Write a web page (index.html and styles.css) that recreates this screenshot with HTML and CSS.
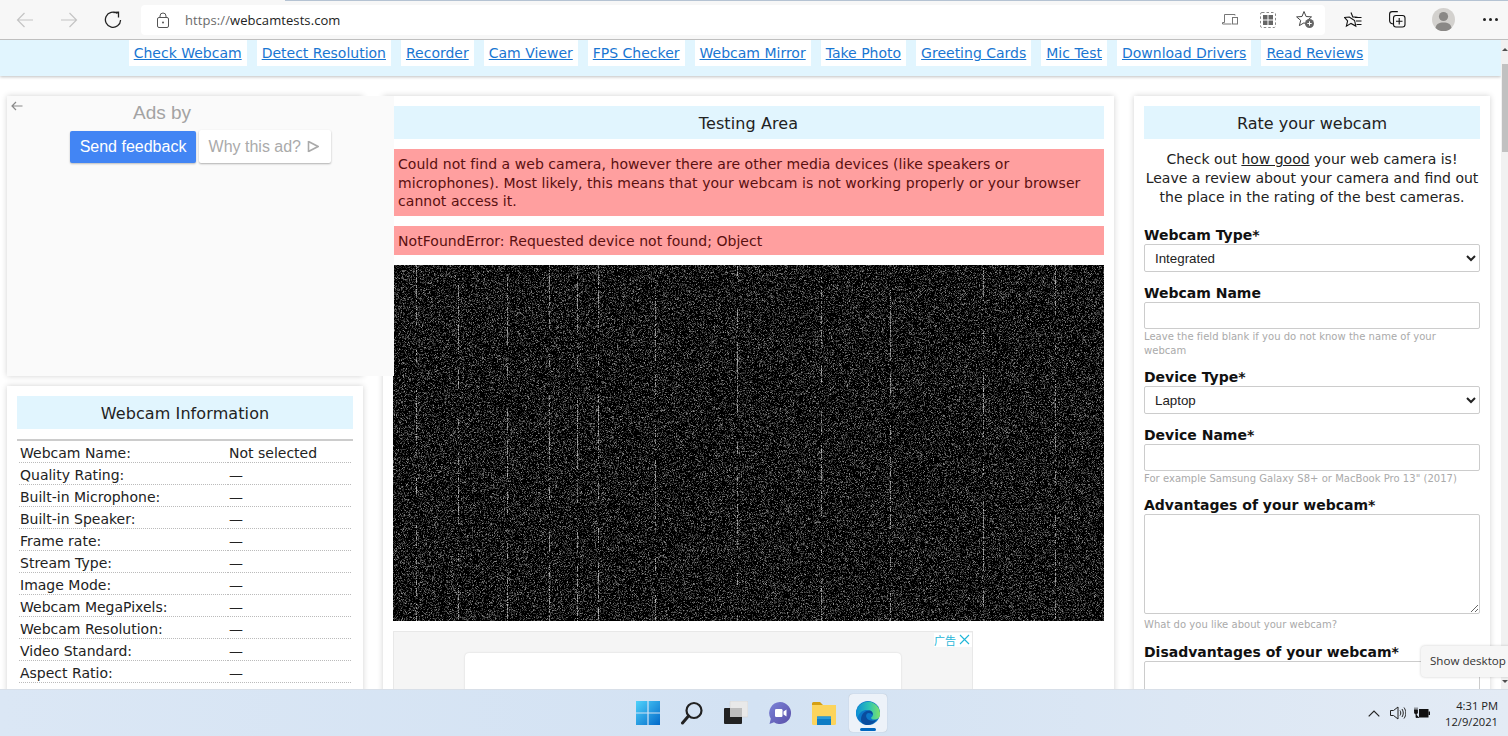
FILE: index.html
```html
<!DOCTYPE html>
<html lang="en">
<head>
<meta charset="utf-8">
<title>Webcam Test</title>
<link rel="stylesheet" href="styles.css">
</head>
<body>
<div class="screen">
  <header class="chrome">
    <div class="topline"></div>
    <button class="cbtn dim"><svg width="18" height="18" viewBox="0 0 18 18"><path d="M17 9H1.5M8.5 2 1.5 9l7 7" fill="none" stroke="#c4c4c4" stroke-width="1.2"/></svg></button>
    <button class="cbtn dim"><svg width="18" height="18" viewBox="0 0 18 18"><path d="M1 9h15.5M9.5 2l7 7-7 7" fill="none" stroke="#c4c4c4" stroke-width="1.2"/></svg></button>
    <button class="cbtn"><svg width="18" height="18" viewBox="0 0 18 18"><path d="M13.5 2.6A7.6 7.6 0 1 0 16.6 9" fill="none" stroke="#222" stroke-width="1.3"/><path d="M9.5 1.5 14.5 1.2V6.5" fill="none" stroke="#222" stroke-width="1.3"/></svg></button>
    <div class="omnibox">
      <svg class="lock" width="14" height="16" viewBox="0 0 14 16"><rect x="1.5" y="5.5" width="11" height="10" rx="1.5" fill="none" stroke="#555"/><path d="M4 5.5V4a3 3 0 0 1 6 0v1.5" fill="none" stroke="#555"/><circle cx="7" cy="10.5" r="1" fill="#555"/></svg>
      <span class="url"><span class="proto">https://</span>webcamtests.com</span>
      <span class="spacer"></span>
      <svg class="oicon wide" width="16" height="14" viewBox="0 0 16 14"><path d="M13 2.5V1.5H2.5v8h-2v1.5h9" fill="none" stroke="#777"/><rect x="10.5" y="4.5" width="5" height="6.5" fill="none" stroke="#777"/></svg>
      <svg class="oicon" width="16" height="16" viewBox="0 0 16 16"><rect x=".5" y=".5" width="15" height="15" rx="1.5" fill="none" stroke="#888" stroke-dasharray="2.5 2"/><rect x="3" y="3" width="4.5" height="4.5" fill="#666"/><rect x="8.5" y="3" width="4.5" height="4.5" fill="#666"/><rect x="3" y="8.5" width="4.5" height="4.5" fill="#666"/><rect x="8.5" y="8.5" width="4.5" height="4.5" fill="#666"/></svg>
      <svg class="oicon last" width="19" height="19" viewBox="0 0 19 19"><path d="M8 1.5l2.1 5 5.4.4-4.1 3.5 1.3 5.2L8 12.8l-4.6 2.8 1.3-5.2L.6 6.9 6 6.5z" fill="none" stroke="#444"/><circle cx="13.5" cy="13.5" r="4.5" fill="#666"/><path d="M11.3 13.5h4.4M13.5 11.3v4.4" stroke="#fff"/></svg>
    </div>
    <div class="tools">
      <svg width="18" height="17" viewBox="0 0 18 17"><path d="M7 1.5l1.8 4.4 4.7.4M10.6 9.5l1.2 5.6L7 12.4l-4.6 2.7 1.2-5.2L.5 6.4l4.8-.4z" fill="none" stroke="#111" stroke-width="1.1"/><path d="M11 6.5h6.5M12 10h5.500M12.500 13.500h5" stroke="#111" stroke-width="1.100"/></svg>
      <svg width="17" height="17" viewBox="0 0 17 17"><path d="M4 13C1.500 12.500.6 11 .6 9.500V3.200C.6 1.700 1.700.6 3.200.6h5.600" fill="none" stroke="#111" stroke-width="1.100"/><rect x="4.500" y="4.500" width="11.500" height="11.500" rx="2.500" fill="none" stroke="#111" stroke-width="1.100"/><path d="M10.200 7v6.500M7 10.200h6.500" stroke="#111" stroke-width="1.100"/></svg>
      <span class="avatar"><svg width="23" height="23" viewBox="0 0 23 23"><circle cx="11.500" cy="11.500" r="11.500" fill="#d3d1ce"/><circle cx="11.500" cy="8.500" r="4.600" fill="#8a8886"/><path d="M3.500 20c.5-3.800 3.500-5.500 8-5.500s7.500 1.700 8 5.500a11.500 11.500 0 0 1-16 0z" fill="#8a8886"/></svg></span>
      <span class="more"><i></i><i></i><i></i></span>
    </div>
  </header>

  <div class="viewport">
    <div class="page">
      <nav class="nav">
        <a href="#">Check Webcam</a>
        <a href="#">Detect Resolution</a>
        <a href="#">Recorder</a>
        <a href="#">Cam Viewer</a>
        <a href="#">FPS Checker</a>
        <a href="#">Webcam Mirror</a>
        <a href="#">Take Photo</a>
        <a href="#">Greeting Cards</a>
        <a href="#">Mic Test</a>
        <a href="#">Download Drivers</a>
        <a href="#">Read Reviews</a>
      </nav>
      <main class="cols">
        <aside class="left">
          <div class="adslot">
            <div class="adpanel">
              <svg class="adback" width="12" height="10" viewBox="0 0 12 10"><path d="M11.500 5H1M5 1 1 5l4 4" fill="none" stroke="#8a8a8a" stroke-width="1.200"/></svg>
              <div class="adsby">Ads by</div>
              <div class="adbtns">
                <span class="fb">Send feedback</span>
                <span class="why">Why this ad? <svg width="12" height="13" viewBox="0 0 12 13"><path d="M1.500 1v11M1.500 1.500 11 6.500l-9.500 5" fill="none" stroke="#aaa" stroke-width="1.600"/></svg></span>
              </div>
            </div>
          </div>
          <section class="card info">
            <h2 class="head">Webcam Information</h2>
            <dl class="specs">
              <div class="row"><dt>Webcam Name:</dt><dd>Not selected</dd></div>
              <div class="row"><dt>Quality Rating:</dt><dd>—</dd></div>
              <div class="row"><dt>Built-in Microphone:</dt><dd>—</dd></div>
              <div class="row"><dt>Built-in Speaker:</dt><dd>—</dd></div>
              <div class="row"><dt>Frame rate:</dt><dd>—</dd></div>
              <div class="row"><dt>Stream Type:</dt><dd>—</dd></div>
              <div class="row"><dt>Image Mode:</dt><dd>—</dd></div>
              <div class="row"><dt>Webcam MegaPixels:</dt><dd>—</dd></div>
              <div class="row"><dt>Webcam Resolution:</dt><dd>—</dd></div>
              <div class="row"><dt>Video Standard:</dt><dd>—</dd></div>
              <div class="row"><dt>Aspect Ratio:</dt><dd>—</dd></div>
            </dl>
          </section>
        </aside>

        <section class="card center">
          <h2 class="head">Testing Area</h2>
          <div class="alert">Could not find a web camera, however there are other media devices (like speakers or microphones). Most likely, this means that your webcam is not working properly or your browser cannot access it.</div>
          <div class="alert">NotFoundError: Requested device not found; Object</div>
          <canvas class="noise" id="noise" width="711" height="356"></canvas>
          <div class="ad2">
            <span class="adtag">广告<svg width="11" height="11" viewBox="0 0 11 11"><path d="M1 1l9 9M10 1l-9 9" stroke="#1fb6d8" stroke-width="1.100"/></svg></span>
            <div class="ad2inner"></div>
          </div>
        </section>

        <section class="card rate">
          <h2 class="head">Rate your webcam</h2>
          <p class="intro">Check out <a href="#">how good</a> your web camera is!<br>Leave a review about your camera and find out the place in the rating of the best cameras.</p>
          <form class="form">
            <label class="lab">Webcam Type*</label>
            <select class="ctl sel"><option>Integrated</option></select>
            <label class="lab">Webcam Name</label>
            <input class="ctl inp" type="text">
            <p class="hint">Leave the field blank if you do not know the name of your webcam</p>
            <label class="lab">Device Type*</label>
            <select class="ctl sel"><option>Laptop</option></select>
            <label class="lab">Device Name*</label>
            <input class="ctl inp" type="text">
            <p class="hint">For example Samsung Galaxy S8+ or MacBook Pro 13" (2017)</p>
            <label class="lab">Advantages of your webcam*</label>
            <textarea class="ctl area"></textarea>
            <p class="hint tall">What do you like about your webcam?</p>
            <label class="lab">Disadvantages of your webcam*</label>
            <textarea class="ctl area"></textarea>
          </form>
        </section>
      </main>
    </div>
    <div class="scrollbar">
      <span class="sb-up"></span>
      <span class="sb-thumb"></span>
      <span class="sb-down"></span>
    </div>
  </div>

  <footer class="taskbar">
    <div class="tb-icons">
      <span class="tb"><svg width="24" height="24" viewBox="0 0 24 24"><defs><linearGradient id="w" x1="0" y1="0" x2="1" y2="1"><stop offset="0" stop-color="#4fd2fb"/><stop offset="1" stop-color="#0369c9"/></linearGradient></defs><path d="M0 0h11.400v11.400H0zM12.600 0H24v11.400H12.600zM0 12.600h11.400V24H0zM12.600 12.600H24V24H12.600z" fill="url(#w)"/></svg></span>
      <span class="tb"><svg width="24" height="24" viewBox="0 0 24 24"><circle cx="14" cy="9.500" r="7.500" fill="none" stroke="#222" stroke-width="2.200"/><path d="M8.500 15 2.500 22" stroke="#222" stroke-width="3" stroke-linecap="round"/></svg></span>
      <span class="tb"><svg width="24" height="24" viewBox="0 0 24 24"><rect x="6" y="0" width="18" height="16" rx="1" fill="#e9e9e9"/><rect x="6" y="0" width="18" height="16" rx="1" fill="none" stroke="#d5d5d5" stroke-width=".6"/><rect x="0" y="7" width="18" height="16" rx="1" fill="#222"/><rect x="6" y="7" width="12" height="9" fill="#bdbdbd"/></svg></span>
      <span class="tb"><svg width="24" height="24" viewBox="0 0 24 24"><defs><linearGradient id="ch" x1="0" y1="0" x2="1" y2="1"><stop offset="0" stop-color="#7b83d8"/><stop offset="1" stop-color="#5a4fa8"/></linearGradient></defs><path d="M12 1a11 11 0 1 1-6 20.200L1.500 23l1.300-5.300A11 11 0 0 1 12 1z" fill="url(#ch)"/><rect x="7" y="8" width="7.500" height="8" rx="1.200" fill="#fff"/><path d="M15.500 10.500l3-2v7l-3-2z" fill="#fff"/></svg></span>
      <span class="tb"><svg width="24" height="23" viewBox="0 0 24 23"><path d="M0 1.500A1.500 1.500 0 0 1 1.500 0H8l3 3H0z" fill="#d59f14"/><path d="M0 3h24v18.500a1.500 1.500 0 0 1-1.500 1.500h-21A1.500 1.500 0 0 1 0 21.500z" fill="#fcd45c"/><path d="M5 14.500h14v8.500H5z" fill="#0d7cc4"/><path d="M5 15.500a1 1 0 0 1 1-1h12a1 1 0 0 1 1 1V17H5z" fill="#2b9bd8"/></svg></span>
      <span class="tb tile"><svg width="24" height="24" viewBox="0 0 24 24"><defs><linearGradient id="e1" x1="0" y1="0" x2="1" y2="0"><stop offset="0" stop-color="#0c8ed8"/><stop offset=".55" stop-color="#2fc4b2"/><stop offset="1" stop-color="#7fe36a"/></linearGradient></defs><circle cx="12" cy="12" r="12" fill="#0c78c9"/><path d="M0 12a12 12 0 0 1 24 1.500c0 3-2.500 5-5.500 5-2.500 0-3.500-1-3.500-1.800 2-1 2.600-3.700 1-5.500C12.500 7.500 4 8 1.500 17 .5 15.500 0 14 0 12z" fill="url(#e1)"/><path d="M5 19c0-6 4-9.500 8-9.500 2.500 0 4.500 1.800 3.500 4.500-.8-1.300-2.200-2-3.700-2C9.500 12 9 17 13 19c3 1.500 6 .5 7.500-.5-2 3-5 5.500-8.500 5.500-3.500 0-7-2-7-5z" fill="#0a4c9e"/></svg><i class="running"></i></span>
    </div>
    <div class="tray">
      <svg class="t-chev" width="12" height="7" viewBox="0 0 12 7"><path d="M.7 6.300 6 1l5.300 5.300" fill="none" stroke="#222" stroke-width="1.200"/></svg>
      <svg class="t-vol" width="16" height="14" viewBox="0 0 16 14"><path d="M.5 4.500h3L8 1v12L3.500 9.500h-3z" fill="none" stroke="#222"/><path d="M10 4.500c1 1.500 1 3.500 0 5M12 3c1.700 2.500 1.700 5.500 0 8M14 1.500c2.400 3.500 2.400 7.500 0 11" fill="none" stroke="#222"/></svg>
      <svg class="t-bat" width="16" height="12" viewBox="0 0 16 12"><rect x="5" y="2" width="9.500" height="8.500" fill="#111"/><rect x="14.500" y="4.500" width="1.500" height="3.500" fill="#111"/><path d="M0 3h3.500v3L2.500 7h-1l-1-1zM1 3V.5M3 3V.5M2 7v3.500h3" fill="#111" stroke="#111" stroke-width=".8"/></svg>
      <div class="clock"><div>4:31 PM</div><div>12/9/2021</div></div>
    </div>
  </footer>

  <div class="tooltip">Show desktop</div>
</div>
<script src="noise.js"></script>
</body>
</html>
```
FILE: styles.css
```css
* { box-sizing: border-box; }
html, body { margin: 0; height: 100%; overflow: hidden; }
body { font-family: "DejaVu Sans", Verdana, sans-serif; font-size: 14px; color: #222; background: #fff; }
.screen { position: relative; display: flex; flex-direction: column; width: 1508px; height: 736px; overflow: hidden; }

/* browser chrome */
.chrome { position: relative; flex: none; height: 40px; display: flex; align-items: center; background: #f7f7f7; border-bottom: 1px solid #bfbfbf; padding-left: 3px; }
.topline { position: absolute; left: 285px; right: 0; top: 0; height: 1px; background: #b5c3d3; }
.cbtn { width: 44px; height: 32px; padding: 0; border: 0; background: none; display: flex; align-items: center; justify-content: center; }
.omnibox { width: 1184px; height: 30px; margin-left: 6px; background: #fff; border-radius: 4px; display: flex; align-items: center; padding-left: 15px; }
.url { margin-left: 15px; font-family: "Open Sans", "Noto Sans", sans-serif; font-size: 13px; letter-spacing: .08px; color: #222; }
.proto { color: #6b6b6b; }
.spacer { flex: 1; }
.oicon { margin-right: 20px; }
.oicon.wide { margin-right: 22px; }
.oicon.last { margin-right: 10px; }
.tools { flex: 1; display: flex; align-items: center; padding-left: 19px; gap: 27px; }
.avatar { display: flex; margin-left: -1px; }
.more { display: flex; gap: 3px; margin-left: 1px; }
.more i { width: 3px; height: 3px; border-radius: 50%; background: #222; }

/* page */
.viewport { flex: 1; min-height: 0; display: flex; overflow: hidden; background: #fff; }
.page { width: 1501px; flex: none; overflow: hidden; }
.nav { height: 36px; background: #e1f5fe; box-shadow: 0 1px 3px rgba(0,0,0,.25); display: flex; justify-content: center; align-items: flex-start; gap: 10px; padding-right: 4px; }
.nav a { height: 26px; line-height: 26px; padding: 0 5px; background: #fff; color: #1976d2; font-size: 14px; }
.cols { display: flex; align-items: flex-start; gap: 20px; padding: 20px 0 0 7px; }
.left { width: 356px; flex: none; }
.card { background: #fff; box-shadow: 0 0 6px rgba(0,0,0,.18); padding: 10px; }
.head { margin: 0; height: 33px; line-height: 35px; background: #e1f5fe; text-align: center; font-size: 16px; font-weight: 400; letter-spacing: .1px; color: #222; }
.rate .head { letter-spacing: 0; }

/* left column */
.adslot { position: relative; z-index: 2; height: 280px; margin-bottom: 10px; box-shadow: 0 0 6px rgba(0,0,0,.18); }
.adpanel { position: relative; width: 387px; height: 280px; background: #fafafa; font-family: "Liberation Sans", Arial, sans-serif; text-align: center; }
.adback { position: absolute; left: 4px; top: 5px; }
.adsby { width: 310px; padding-top: 6px; height: 35px; font-size: 19px; color: #a3a3a3; }
.adbtns { display: flex; gap: 3px; margin-left: 63px; }
.fb { width: 126px; height: 32px; line-height: 32px; background: #4285f4; color: #fff; border-radius: 2px; font-size: 16px; box-shadow: 0 1px 2px rgba(0,0,0,.25); }
.why { width: 132px; height: 33px; line-height: 33px; padding-right: 2px; background: #fff; color: #aaa; border-radius: 2px; font-size: 16px; box-shadow: 0 1px 2px rgba(0,0,0,.3); margin-top: -1px; }
.why svg { vertical-align: -1px; margin-left: 2px; }
.specs { margin: 10px 0 0; border-top: 2px solid #ccc; }
.row { display: flex; height: 22px; }
dt { flex: none; width: 209px; margin: 0 0 0 2px; padding-left: 1px; height: 22px; line-height: 24px; border-bottom: 1px dotted #bbb; }
dd { flex: 1; margin: 0 2px 0 0; padding-left: 1px; height: 22px; line-height: 24px; border-bottom: 1px dotted #bbb; }

/* middle column */
.center { width: 731px; flex: none; }
.alert { margin-top: 10px; padding: 6px 5px 5px; background: #ff9f9f; color: #5a1010; line-height: 18.700px; font-size: 14px; letter-spacing: .05px; }
.alert + .alert { padding: 6px 5px 4px; }
.noise { display: block; margin: 10px 0; width: 711px; height: 356px; background: #000; }
.ad2 { position: relative; width: 580px; height: 100px; background: #f5f5f5; border: 1px solid #e8e8e8; padding: 21px 71px 0; }
.ad2inner { height: 100px; background: #fff; border-radius: 4px; box-shadow: 0 0 2px rgba(0,0,0,.15); }
.adtag { position: absolute; right: 0; top: 1px; display: flex; align-items: center; gap: 3px; height: 14px; padding: 0 2px 0 0; background: #fff; color: #1fb6d8; font: 11px "Noto Sans CJK SC", sans-serif; }

/* right column */
.rate { width: 356px; flex: none; }
.intro { margin: 11px 0 0; text-align: center; line-height: 19px; color: #222; }
.intro a { color: #222; }
.form { display: flex; flex-direction: column; margin-top: 17px; }
.lab { display: block; height: 20px; line-height: 22px; font-weight: 700; font-size: 14px; color: #111; }
.ctl { display: block; width: 336px; border: 1px solid #ccc; border-radius: 2px; background: #fff; margin: 0; }
.sel { height: 28px; padding-left: 6px; font: 13.330px "Liberation Sans", Arial, sans-serif; color: #222; margin-bottom: 10px; }
.inp { height: 27px; margin-bottom: 1px; }
.area { height: 100px; margin-bottom: 4px; resize: vertical; }
.hint { margin: 0 0 8px; font-size: 10px; line-height: 14px; color: #aaa; letter-spacing: .03px; }
.hint.tall { margin-bottom: 9px; }

/* scrollbar */
.scrollbar { position: relative; flex: 1; background: #f1f1f1; }
.sb-thumb { position: absolute; left: 1px; right: 0; top: 24px; height: 88px; background: #c1c1c1; }
.sb-up, .sb-down { position: absolute; left: 1px; width: 0; height: 0; border-left: 3px solid transparent; border-right: 3px solid transparent; }
.sb-up { top: 8px; border-bottom: 3px solid #505050; }
.sb-down { bottom: 6px; border-top: 3px solid #505050; }

/* taskbar */
.taskbar { position: relative; flex: none; height: 47px; display: flex; justify-content: center; background: linear-gradient(90deg, #dbe7f5, #d3e2f3 50%, #e3ebf5); border-top: 1px solid #d8dfe8; }
.tb-icons { display: flex; align-items: center; gap: 14px; margin-left: 12px; height: 46px; }
.tb { width: 30px; height: 38px; display: flex; align-items: center; justify-content: center; }
.tb.tile { position: relative; width: 38px; margin-left: -4px; background: #edf2f9; border-radius: 4px; box-shadow: 0 0 1px rgba(0,0,0,.25); }
.running { position: absolute; left: 11px; bottom: 1px; width: 16px; height: 3px; border-radius: 2px; background: #0067c0; }
.tray { position: absolute; right: 10px; top: 0; height: 46px; display: flex; align-items: center; }
.t-chev { margin-right: 10px; }
.t-vol { margin-right: 8px; }
.clock { margin-left: 15px; margin-top: 2px; text-align: right; font: 11.200px/16px "Open Sans", "Noto Sans", sans-serif; color: #222; }

.tooltip { position: absolute; left: 1421px; top: 646px; width: 90px; height: 31px; padding-left: 9px; background: #f6f6f6; border-radius: 4px; box-shadow: 0 0 3px rgba(0,0,0,.2); font: 11.600px/30px "Open Sans", "Noto Sans", sans-serif; color: #333; white-space: nowrap; overflow: hidden; }
```
FILE: noise.js
```js
(function () {
  var c = document.getElementById('noise');
  var x = c.getContext('2d');
  var w = c.width, h = c.height;
  var img = x.createImageData(w, h);
  var d = img.data;
  var seed = 12345;
  function r() { seed = (seed * 16807) % 2147483647; return seed / 2147483647; }
  var streaks = [23, 65, 114, 156, 184, 205, 262, 344, 428, 497, 590, 662];
  var phase = {};
  streaks.forEach(function (s) { phase[s] = r() * 6; });
  for (var py = 0; py < h; py++) {
    for (var px = 0; px < w; px++) {
      var v = r() < 0.4 ? 30 + r() * r() * 125 : 0;
      if (phase[px] !== undefined && Math.sin(py / 23 + phase[px]) + Math.sin(py / 7 + phase[px] * 2) > -0.3 && r() < .7) {
        v = 90 + r() * 100;
      }
      var i = (py * w + px) * 4;
      d[i] = d[i + 1] = d[i + 2] = v;
      d[i + 3] = 255;
    }
  }
  x.putImageData(img, 0, 0);
})();
```
